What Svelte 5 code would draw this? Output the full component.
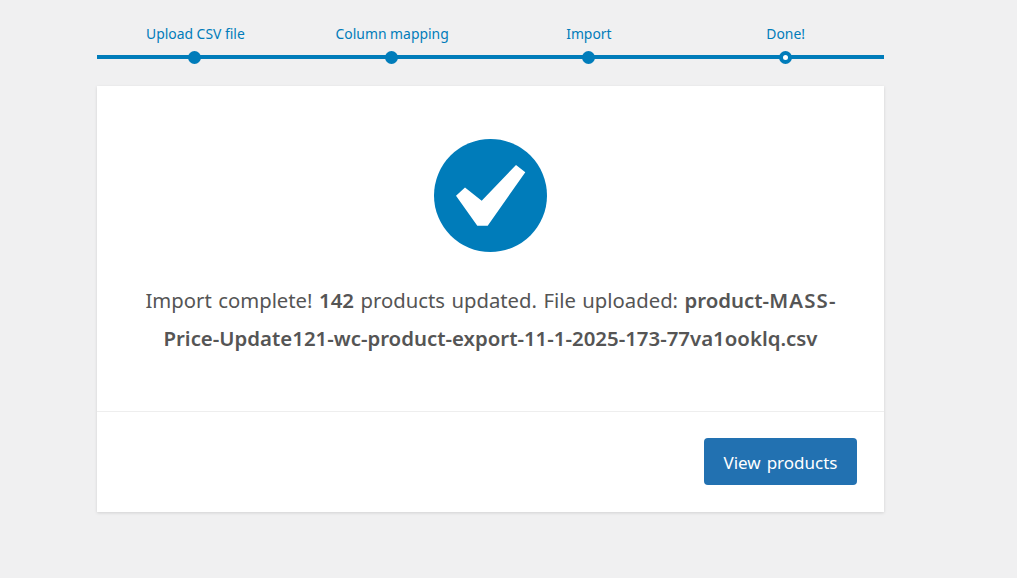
<script>
  const steps = ['Upload CSV file', 'Column mapping', 'Import', 'Done!'];
</script>

<div class="page">
  <main class="wrap">
    <ol class="steps">
      {#each steps as step, i}
        <li class="step" class:last={i === steps.length - 1}>{step}</li>
      {/each}
    </ol>
    <section class="card">
      <div class="content">
        <svg class="check" viewBox="0 0 113 113" aria-hidden="true">
          <circle cx="56.500" cy="56.500" r="56.500" fill="#007cba" />
          <path d="M22 56.700 L31 48.500 L47.700 61.700 L82 26 L91.300 33.300 L53.700 86.700 L43.300 86.700 Z" fill="#fff" />
        </svg>
        <p class="msg">Import complete! <strong>142</strong> products updated. File uploaded: <strong>product-<span class="caps">MASS</span>-Price-Update121-wc-product-export-11-1-2025-173-77va1ooklq.csv</strong></p>
      </div>
      <div class="actions">
        <button class="btn">View products</button>
      </div>
    </section>
  </main>
</div>

<style>
  :global(body) {
    margin: 0;
    background: #f0f0f1;
    font-family: "Noto Sans", "Open Sans", sans-serif;
  }
  .page {
    height: 578px;
    overflow: hidden;
    padding-left: 97px;
    box-sizing: border-box;
  }
  .wrap {
    width: 787px;
  }
  .steps {
    list-style: none;
    margin: 0;
    padding: 25px 0 0;
    display: grid;
    grid-template-columns: repeat(4, 1fr);
  }
  .steps::after {
    content: "";
    display: block;
    grid-column: 1 / -1;
    height: 4px;
    background: #007cba;
  }
  .step {
    position: relative;
    text-align: center;
    color: #007cba;
    font-size: 13.900px;
    line-height: 18px;
    padding-bottom: 12px;
  }
  .step::after {
    content: "";
    position: absolute;
    left: 50%;
    bottom: -9px;
    width: 13px;
    height: 13px;
    margin-left: -7px;
    border-radius: 50%;
    background: #007cba;
    z-index: 1;
  }
  .step.last::after {
    box-sizing: border-box;
    border: 4px solid #007cba;
    background: #fff;
  }
  .card {
    margin-top: 27px;
    background: #fff;
    box-shadow: 0 1px 3px rgba(0, 0, 0, 0.13);
    height: 426px;
    display: flex;
    flex-direction: column;
  }
  .content {
    flex: none;
    height: 272px;
    padding: 53px 40px 0;
    border-bottom: 1px solid #eee;
    text-align: center;
  }
  .check {
    display: block;
    width: 113px;
    height: 113px;
    margin: 0 auto;
  }
  .msg {
    margin: 29px 0 0;
    font-size: 20.300px;
    line-height: 38px;
    word-spacing: 1.200px;
    color: #555;
  }
  .msg strong {
    font-size: 20.400px;
    font-weight: 600;
  }
  .caps {
    letter-spacing: 1.200px;
  }
  .actions {
    display: flex;
    justify-content: flex-end;
    padding: 26px 27px 0 0;
  }
  .btn {
    width: 153px;
    height: 47px;
    border: 0;
    border-radius: 4px;
    background: #2271b1;
    color: #fff;
    font-family: inherit;
    font-size: 17px;
    word-spacing: 1.500px;
    padding: 1px 0 0;
  }
</style>
